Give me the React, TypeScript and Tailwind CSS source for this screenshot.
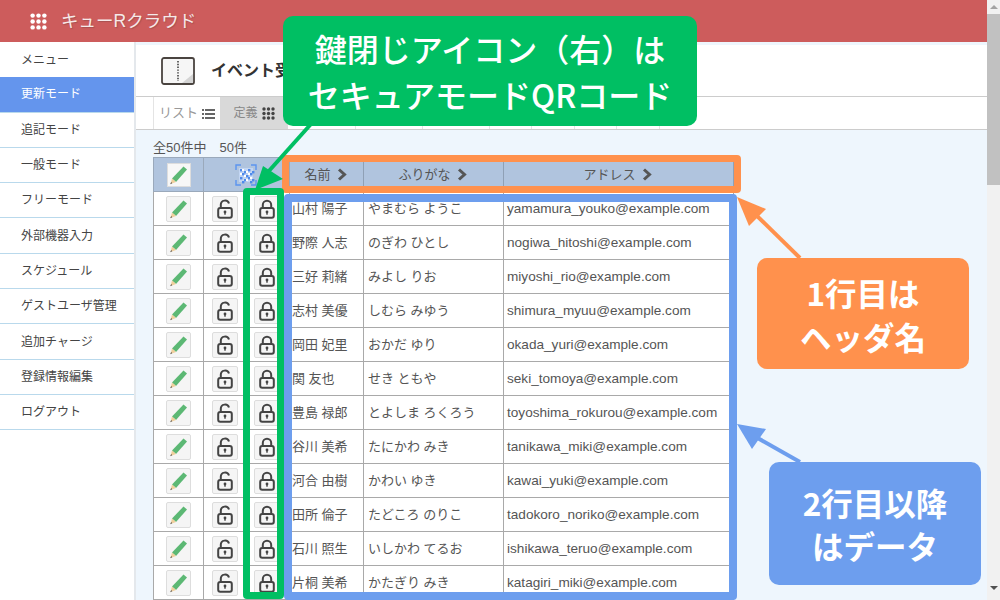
import { Fragment } from 'react'

const menu = ['メニュー', '更新モード', '追記モード', '一般モード', 'フリーモード', '外部機器入力', 'スケジュール', 'ゲストユーザ管理', '追加チャージ', '登録情報編集', 'ログアウト']

const rows = [
  ['山村 陽子', 'やまむら ようこ', 'yamamura_youko@example.com'],
  ['野際 人志', 'のぎわ ひとし', 'nogiwa_hitoshi@example.com'],
  ['三好 莉緒', 'みよし りお', 'miyoshi_rio@example.com'],
  ['志村 美優', 'しむら みゆう', 'shimura_myuu@example.com'],
  ['岡田 妃里', 'おかだ ゆり', 'okada_yuri@example.com'],
  ['関 友也', 'せき ともや', 'seki_tomoya@example.com'],
  ['豊島 禄郎', 'とよしま ろくろう', 'toyoshima_rokurou@example.com'],
  ['谷川 美希', 'たにかわ みき', 'tanikawa_miki@example.com'],
  ['河合 由樹', 'かわい ゆき', 'kawai_yuki@example.com'],
  ['田所 倫子', 'たどころ のりこ', 'tadokoro_noriko@example.com'],
  ['石川 照生', 'いしかわ てるお', 'ishikawa_teruo@example.com'],
  ['片桐 美希', 'かたぎり みき', 'katagiri_miki@example.com'],
]

// empty tabs on the right of the tab row, mostly hidden by the callout
const emptyTabs = ['w-[68px]', 'w-[67px]', 'w-[67px]', 'w-[42px]', 'w-[43px]', 'w-[42px]', 'w-[43px]']

function GridIcon({ color, size = 13 }: { color: string; size?: number }) {
  const dots = [2, 6.5, 11]
  return (
    <svg width={size} height={size} viewBox="0 0 13 13">
      {dots.map((y) => (
        <Fragment key={y}>
          {dots.map((x) => (
            <circle key={x} cx={x} cy={y} r="1.7" fill={color} />
          ))}
        </Fragment>
      ))}
    </svg>
  )
}

function Pencil() {
  return (
    <svg width="20" height="20" viewBox="0 0 20 20">
      <path d="M14.5 1.5 L18 4.5 L7 17 L3 13.5 Z" fill="#5cb874" />
      <path d="M3 13.5 L7 17 L1.5 19 Z" fill="#f0cf9c" />
      <path d="M2.2 17 L3.2 18.3 L1.2 19.2 Z" fill="#555" />
    </svg>
  )
}

function Lock({ open }: { open?: boolean }) {
  return (
    <svg width="16" height="20" viewBox="0 0 16 20" fill="none" stroke="#444" strokeWidth="2">
      {open ? (
        <path d="M3.8 9 V5.8 a4.2 4.2 0 0 1 8.2 -1.3" />
      ) : (
        <path d="M3.8 9 V6 a4.2 4.2 0 0 1 8.4 0 V9" />
      )}
      <rect x="1.2" y="9" width="13.6" height="9.8" rx="2" />
      <circle cx="8" cy="13" r="1.4" fill="#444" stroke="none" />
      <path d="M8 13 V15.8" strokeWidth="1.4" />
    </svg>
  )
}

function QrIcon() {
  const cells = [
    [5, 5], [9, 7], [13, 5], [17, 7], [7, 9], [11, 11], [15, 9], [5, 13], [9, 15], [13, 13], [17, 15], [7, 17], [15, 17],
  ]
  return (
    <svg width="22" height="22" viewBox="0 0 22 22" fill="none">
      <path d="M1 6 V1 H6 M16 1 H21 V6 M21 16 V21 H16 M6 21 H1 V16" stroke="#5b94f0" strokeWidth="1.4" />
      <rect x="4" y="4" width="14" height="14" fill="#c3d6f3" />
      {cells.map(([x, y]) => (
        <rect key={`${x}-${y}`} x={x} y={y} width="2.4" height="2.4" fill="#4f8aea" />
      ))}
      {[[7, 5], [11, 7], [5, 9], [13, 9], [9, 11], [15, 13], [11, 15]].map(([x, y]) => (
        <rect key={`w${x}-${y}`} x={x} y={y} width="2" height="2" fill="#fff" />
      ))}
    </svg>
  )
}

function IconButton({ w, children }: { w: string; children: React.ReactNode }) {
  return (
    <div className={`${w} h-[26px] mx-auto flex items-center justify-center bg-[#f5f5f5] border border-[#dddddd] rounded-[2px]`}>
      {children}
    </div>
  )
}

function Chevron() {
  return (
    <svg width="10" height="13" viewBox="0 0 10 13" fill="none" stroke="#555" strokeWidth="3">
      <path d="M2 1.5 L7.5 6.5 L2 11.5" />
    </svg>
  )
}

export default function App() {
  return (
    <div className="relative flex w-[1000px] h-[600px] overflow-hidden bg-white text-[#555555] font-['Liberation_Sans','Noto_Sans_CJK_JP',sans-serif]">
      <div className="w-[987px] shrink-0 flex flex-col">
        <header className="h-[42px] shrink-0 bg-[#cd5c5c] flex items-center pl-[30px] gap-[14px]">
          <GridIcon color="#ffffff" size={17} />
          <span className="text-[17.5px] text-[#f6e9e9] [text-shadow:1px_1px_1px_#a85050]">キューRクラウド</span>
        </header>

        <div className="flex h-[558px]">
          <nav className="w-[134px] shrink-0 bg-white">
            {menu.map((m, i) => (
              <div
                key={m}
                className={`h-[35.3px] flex items-center pl-[21px] text-[12px] border-b border-[#b9d9ec] ${i === 1 ? 'bg-[#6495ed] text-white' : 'text-[#444444]'} ${i === 0 ? 'border-b-0' : ''}`}
              >
                {m}
              </div>
            ))}
          </nav>

          <main className="flex-1 min-w-0 flex flex-col border-l-2 border-[#e4e8ec] bg-[#eef6fd] pt-[3px]">
            <div className="h-[51px] shrink-0 bg-white flex items-center pl-[25px] gap-[16px]">
              <svg width="34" height="28" viewBox="0 0 34 28" fill="none">
                <rect x="1" y="1" width="32" height="26" rx="2" fill="#f6f6f6" stroke="#4a4440" strokeWidth="1.8" />
                <path d="M32 17 L32 26 L21 26 Z" fill="#d4d4d4" />
                <path d="M17 4 V24" stroke="#666" strokeWidth="2" strokeDasharray="1.4 1.4" />
              </svg>
              <span className="text-[16px] font-bold text-[#333333] whitespace-nowrap">イベント受付</span>
            </div>

            <div className="h-[34px] shrink-0 bg-white flex border-y border-[#cccccc] pl-[17px] text-[13px] text-[#999999]">
              <div className="w-[67px] border-l border-[#e4e4e4] flex items-center justify-center gap-[4px]">
                リスト
                <svg width="13" height="11" viewBox="0 0 13 11" fill="#666">
                  <rect x="0" y="1" width="2" height="2" /><rect x="3" y="1" width="10" height="2" />
                  <rect x="0" y="5" width="2" height="2" /><rect x="3" y="5" width="10" height="2" />
                  <rect x="0" y="9" width="2" height="2" /><rect x="3" y="9" width="10" height="2" />
                </svg>
              </div>
              <div className="w-[68px] bg-[#d9d9d9] flex items-center justify-center gap-[4px] text-[12px] text-[#888888]">
                定義
                <GridIcon color="#444444" />
              </div>
              {emptyTabs.map((w, i) => (
                <div key={i} className={`${w} border-r border-[#e4e4e4]`} />
              ))}
            </div>

            <div className="flex-1 pt-[8px] pl-[17px]">
              <div className="h-[19px] text-[13px] text-[#555555] leading-[19px]">全50件中　50件</div>
              <table className="table-fixed border-collapse w-[580px] text-[13px]">
                <colgroup>
                  <col className="w-[50px]" />
                  <col className="w-[42px]" />
                  <col className="w-[44px]" />
                  <col className="w-[74px]" />
                  <col className="w-[140px]" />
                  <col className="w-[230px]" />
                </colgroup>
                <thead>
                  <tr className="h-[34px] bg-[#b0c4de]">
                    <th className="border border-[#9aa9bb]">
                      <div className="w-[24px] h-[24px] mx-auto flex items-center justify-center bg-[#f7f7f7] border border-[#dddddd]">
                        <Pencil />
                      </div>
                    </th>
                    <th colSpan={2} className="border border-[#9aa9bb]">
                      <div className="flex justify-center pr-[1px]"><QrIcon /></div>
                    </th>
                    {['名前', 'ふりがな', 'アドレス'].map((h) => (
                      <th key={h} className="border border-[#8fa0b5] font-normal text-[#555555]">
                        <div className="flex items-center justify-center gap-[6px] pr-[2px]">{h}<Chevron /></div>
                      </th>
                    ))}
                  </tr>
                </thead>
                <tbody>
                  {rows.map((r) => (
                    <tr key={r[2]} className="h-[34px] bg-white">
                      <td className="border border-[#a9a9a9]"><IconButton w="w-[25px]"><Pencil /></IconButton></td>
                      <td className="border-y border-[#a9a9a9]"><IconButton w="w-[26px]"><Lock open /></IconButton></td>
                      <td className="border-y border-[#a9a9a9]"><IconButton w="w-[26px]"><Lock /></IconButton></td>
                      <td className="border border-[#a9a9a9] pl-[2px] pt-[1px] whitespace-nowrap">{r[0]}</td>
                      <td className="border border-[#a9a9a9] pl-[4px] pt-[1px] whitespace-nowrap">{r[1]}</td>
                      <td className="border border-[#a9a9a9] pl-[3px] pt-[1px] whitespace-nowrap text-[13.6px]">{r[2]}</td>
                    </tr>
                  ))}
                </tbody>
              </table>
            </div>
          </main>
        </div>
      </div>

      <div className="w-[13px] shrink-0 bg-[#f1f1f1] flex flex-col items-center">
        <div className="h-[14px] flex items-center">
          <div className="w-0 h-0 border-x-[4px] border-x-transparent border-b-[4px] border-b-[#a3a3a3]" />
        </div>
        <div className="w-full h-[171px] bg-[#c1c1c1]" />
        <div className="mt-[401px] w-0 h-0 border-x-[4px] border-x-transparent border-t-[4px] border-t-[#505050]" />
      </div>

      {/* annotations drawn over the screen */}
      <div className="absolute left-[282px] top-[155px] w-[459px] h-[38px] border-[7px] border-[#ff914d] rounded-[4px]" />
      <div className="absolute left-[284px] top-[194px] w-[453px] h-[406px] border-[8px] border-[#6d9eee] rounded-[4px]" />
      <div className="absolute left-[243px] top-[188px] w-[41px] h-[411px] border-[7px] border-[#00bf63] rounded-[4px]" />

      <svg className="absolute inset-0 pointer-events-none" width="1000" height="600" viewBox="0 0 1000 600">
        <path d="M311 124 L268 172" stroke="#00bf63" strokeWidth="4" />
        <path d="M255 190 L263 166 L283 179 Z" fill="#00bf63" />
        <path d="M800 258 L754 213" stroke="#ff914d" strokeWidth="4" />
        <path d="M737 197 L766 209 L749 226 Z" fill="#ff914d" />
        <path d="M800 462 L754 436" stroke="#6d9eee" strokeWidth="4" />
        <path d="M737 424 L766 429 L752 449 Z" fill="#6d9eee" />
      </svg>

      <div className="absolute left-[283px] top-[16px] w-[414px] h-[110px] rounded-[10px] bg-[#00bf63] flex flex-col items-center justify-center text-white text-[32px] leading-[46px] font-['Noto_Sans_CJK_JP',sans-serif] font-medium whitespace-nowrap">
        <div>鍵閉じアイコン（右）は</div>
        <div>セキュアモードQRコード</div>
      </div>
      <div className="absolute left-[757px] top-[258px] w-[212px] h-[111px] rounded-[10px] bg-[#ff914d] flex flex-col items-center justify-center text-white text-[31.5px] leading-[44px] font-['Noto_Sans_CJK_JP',sans-serif] font-bold whitespace-nowrap">
        <div>1行目は</div>
        <div>ヘッダ名</div>
      </div>
      <div className="absolute left-[769px] top-[462px] w-[212px] h-[123px] rounded-[10px] bg-[#6d9eee] flex flex-col items-center justify-center text-white text-[31.5px] leading-[43px] font-['Noto_Sans_CJK_JP',sans-serif] font-bold whitespace-nowrap">
        <div>2行目以降</div>
        <div>はデータ</div>
      </div>
    </div>
  )
}
